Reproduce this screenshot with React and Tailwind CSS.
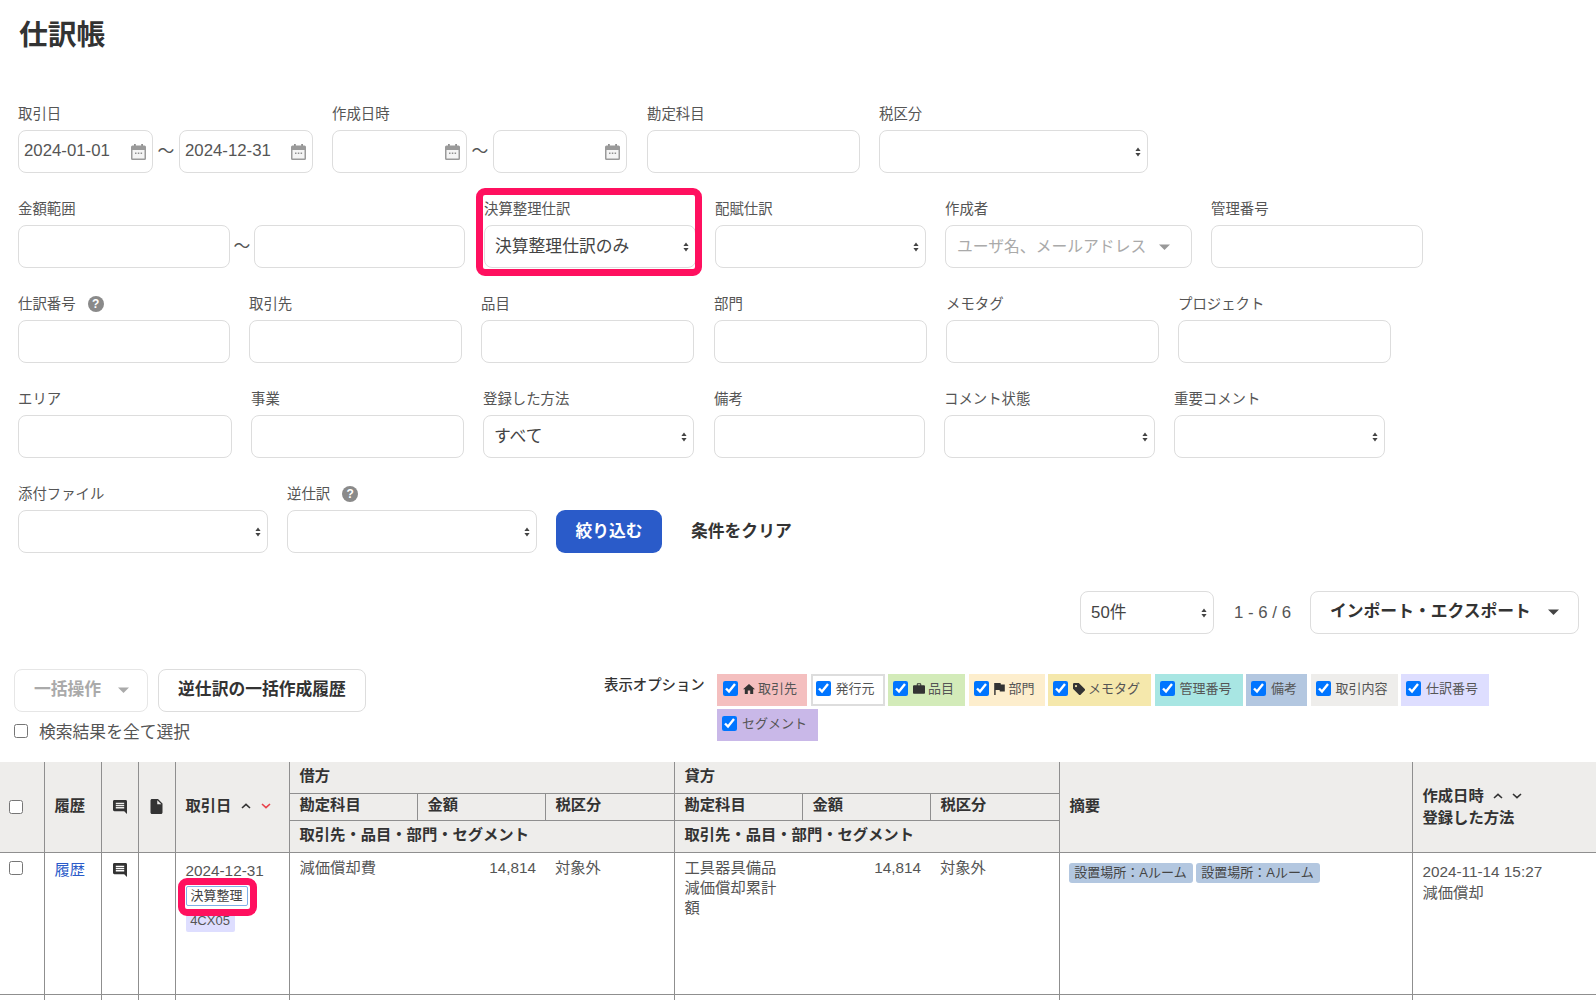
import React from "react";

const Arrows = () => (
  <svg className="absolute right-[7px] top-1/2 -translate-y-1/2 pointer-events-none" width="6" height="10" viewBox="0 0 6 10">
    <path d="M3 0.5 5.600 4H0.400z M3 9.500 0.400 6h5.200z" fill="#444" />
  </svg>
);

const Sel = ({ value = "", cls = "" }) => (
  <div className={"relative " + cls}>
    <select
      defaultValue={value}
      className="w-full h-[43px] appearance-none rounded-[8px] border border-[#dddddd] bg-white pl-[10px] pr-5 text-[16.8px] text-[#444444] outline-none"
    >
      <option value={value}>{value}</option>
    </select>
    <Arrows />
  </div>
);

const Inp = ({ cls = "" }) => (
  <input readOnly className={"h-[43px] rounded-[8px] border border-[#dddddd] bg-white outline-none " + cls} />
);

const Cal = () => (
  <svg width="15" height="16" viewBox="0 0 15 16" className="shrink-0">
    <rect x="3" y="0" width="1.8" height="3" fill="#8f8f8f" />
    <rect x="10.2" y="0" width="1.8" height="3" fill="#8f8f8f" />
    <path d="M1.500 1.500h12a1.500 1.500 0 0 1 1.500 1.500v11.500a1.500 1.500 0 0 1-1.500 1.500h-12A1.500 1.500 0 0 1 0 14.500V3a1.500 1.500 0 0 1 1.500-1.500z" fill="#9a9a9a" />
    <rect x="1.500" y="6" width="12" height="8.500" fill="#f4f4f4" />
    <rect x="4" y="8.500" width="1.500" height="1.500" fill="#8f8f8f" />
    <rect x="6.800" y="8.500" width="1.500" height="1.500" fill="#8f8f8f" />
    <rect x="9.600" y="8.500" width="1.500" height="1.500" fill="#8f8f8f" />
  </svg>
);

const DateBox = ({ value = "", cls = "" }) => (
  <div className={"flex h-[43px] items-center rounded-[8px] border border-[#dddddd] bg-white pl-[5px] pr-[6px] " + cls}>
    <input readOnly value={value} className="min-w-0 flex-1 bg-transparent pb-[2px] text-[16.8px] text-[#555555] outline-none" />
    <Cal />
  </div>
);

const Tilde = ({ cls = "" }) => (
  <span className={"text-center text-[16.8px] text-[#555555] " + cls}>〜</span>
);

const Help = () => (
  <span className="ml-3 flex h-4 w-4 items-center justify-center rounded-full bg-[#8a8a8a] text-[12px] font-bold leading-none text-white">?</span>
);

const Field = ({ label, help, cls = "", children }) => (
  <div className={"flex flex-col gap-[5px] " + cls}>
    <div className="flex h-5 items-center pb-[2px] text-[14.4px] leading-5 whitespace-nowrap text-[#555555]">
      {label}
      {help && <Help />}
    </div>
    {children}
  </div>
);

const Caret = ({ color = "#555555" }) => (
  <svg viewBox="0 0 13 7" className="h-[6px] w-[11px] shrink-0">
    <path d="M0 0.500h13L6.500 7z" fill={color} />
  </svg>
);

const Chev = ({ up, color = "#333333" }) => (
  <svg width="10" height="6" viewBox="0 0 10 6" className="shrink-0">
    <path d={up ? "M1 5 5 1.400 9 5" : "M1 1 5 4.600 9 1"} fill="none" stroke={color} strokeWidth="1.6" />
  </svg>
);

const CommentIcon = () => (
  <svg width="14" height="14" viewBox="2 2 20 20" className="mx-auto">
    <path fill="#333333" d="M21.990 4c0-1.100-.89-2-1.990-2H4c-1.100 0-2 .9-2 2v12c0 1.100.9 2 2 2h14l4 4-.01-18zM18 14H6v-2h12v2zm0-3H6V9h12v2zm0-3H6V6h12v2z" />
  </svg>
);

const HomeIcon = () => (
  <svg width="12" height="12" viewBox="2 3 20 17"><path fill="#333333" d="M10 20v-6h4v6h5v-8h3L12 3 2 12h3v8z" /></svg>
);
const CaseIcon = () => (
  <svg width="12" height="11" viewBox="0 0 16 14">
    <path fill="#333333" d="M5 2.500V1.200C5 .5 5.500 0 6.200 0h3.600C10.500 0 11 .5 11 1.200v1.300h3.500c.8 0 1.500.7 1.500 1.500V12.500c0 .8-.7 1.500-1.500 1.500h-13C.7 14 0 13.300 0 12.500V4c0-.8.7-1.500 1.500-1.500zm1.300 0h3.400V1.300H6.300z" />
  </svg>
);
const FlagIcon = () => (
  <svg width="11" height="12" viewBox="5 4 15 17"><path fill="#333333" d="M14.400 6 14 4H5v17h2v-7h5.600l.4 2h7V6z" /></svg>
);
const TagIcon = () => (
  <svg width="12" height="12" viewBox="0 0 16 16">
    <path fill="#333333" d="M1.500 0h6.200l8 8a1.500 1.500 0 0 1 0 2.100l-5.600 5.600a1.500 1.500 0 0 1-2.100 0l-8-8V1.500A1.500 1.500 0 0 1 1.500 0zM4 5.500a1.500 1.500 0 1 0 0-3 1.500 1.500 0 0 0 0 3z" />
  </svg>
);

const Chip = ({ cls, icon, label, textCls = "ml-[5px]" }) => (
  <label className={"flex h-8 items-center pb-[3px] text-[13px] leading-none text-[#555555] " + cls}>
    <input type="checkbox" defaultChecked className="m-0 h-[15px] w-[15px] shrink-0" />
    {icon && <span className="ml-[5px] flex w-[12px] justify-center">{icon}</span>}
    <span className={"whitespace-nowrap " + textCls}>{label}</span>
  </label>
);

const Th = ({ cls = "", children, ...p }) => (
  <th {...p} className={"border border-[#8f8f8f] bg-[#eeedeb] pl-[10px] pr-[10px] text-left align-middle text-[15.3px] font-bold leading-5 text-[#333333] " + cls}>
    {children}
  </th>
);
const Td = ({ cls = "", children, ...p }) => (
  <td {...p} className={"border border-[#8f8f8f] align-top text-[15.3px] leading-[20px] text-[#555555] " + cls}>
    {children}
  </td>
);

export default function App() {
  return (
    <div className="h-[1000px] w-full overflow-hidden bg-white font-['Liberation_Sans','Noto_Sans_CJK_JP',sans-serif] text-[#333333]">
      <div className="h-[105px] pl-[19px] pt-[15px]">
        <h1 className="text-[28.8px] font-bold leading-10 text-[#333333]">仕訳帳</h1>
      </div>

      <div className="flex flex-col gap-[27px] pl-[18px]">
        <div className="flex gap-[19px]">
          <Field label="取引日" cls="w-[295px]">
            <div className="flex items-center">
              <DateBox value="2024-01-01" cls="w-[135px]" />
              <Tilde cls="w-[26px]" />
              <DateBox value="2024-12-31" cls="w-[134px]" />
            </div>
          </Field>
          <Field label="作成日時" cls="w-[296px]">
            <div className="flex items-center">
              <DateBox cls="w-[135px]" />
              <Tilde cls="w-[26px]" />
              <DateBox cls="w-[134px]" />
            </div>
          </Field>
          <Field label="勘定科目" cls="w-[213px]"><Inp cls="w-full" /></Field>
          <Field label="税区分" cls="w-[269px]"><Sel cls="w-full" /></Field>
        </div>

        <div className="flex gap-[19px]">
          <Field label="金額範囲" cls="w-[447px]">
            <div className="flex items-center">
              <Inp cls="w-[212px]" />
              <Tilde cls="w-[24px]" />
              <Inp cls="w-[211px]" />
            </div>
          </Field>
          <div className="relative w-[212px]">
            <Field label="決算整理仕訳" cls="w-full">
              <Sel value="決算整理仕訳のみ" cls="w-full" />
            </Field>
            <div className="pointer-events-none absolute -left-[8px] -top-[12px] h-[88px] w-[226px] rounded-[9px] border-[7px] border-[#ff105f]" />
          </div>
          <Field label="配賦仕訳" cls="w-[211px]"><Sel cls="w-full" /></Field>
          <Field label="作成者" cls="w-[247px]">
            <div className="flex h-[43px] items-center justify-between rounded-[8px] border border-[#dddddd] bg-white pl-[11px] pr-[21px]">
              <span className="whitespace-nowrap text-[15.8px] text-[#aaaaaa]">ユーザ名、メールアドレス</span>
              <Caret color="#999999" />
            </div>
          </Field>
          <Field label="管理番号" cls="w-[212px]"><Inp cls="w-full" /></Field>
        </div>

        <div className="flex gap-[19px]">
          <Field label="仕訳番号" help cls="w-[212px]"><Inp cls="w-full" /></Field>
          <Field label="取引先" cls="w-[213px]"><Inp cls="w-full" /></Field>
          <Field label="品目" cls="w-[213px]"><Inp cls="w-full" /></Field>
          <Field label="部門" cls="ml-px w-[213px]"><Inp cls="w-full" /></Field>
          <Field label="メモタグ" cls="w-[213px]"><Inp cls="w-full" /></Field>
          <Field label="プロジェクト" cls="w-[213px]"><Inp cls="w-full" /></Field>
        </div>

        <div className="flex gap-[19px]">
          <Field label="エリア" cls="w-[214px]"><Inp cls="w-full" /></Field>
          <Field label="事業" cls="w-[213px]"><Inp cls="w-full" /></Field>
          <Field label="登録した方法" cls="w-[211px]"><Sel value="すべて" cls="w-full" /></Field>
          <Field label="備考" cls="ml-px w-[211px]"><Inp cls="w-full" /></Field>
          <Field label="コメント状態" cls="w-[211px]"><Sel cls="w-full" /></Field>
          <Field label="重要コメント" cls="w-[211px]"><Sel cls="w-full" /></Field>
        </div>

        <div className="flex items-end gap-[19px]">
          <Field label="添付ファイル" cls="w-[250px]"><Sel cls="w-full" /></Field>
          <Field label="逆仕訳" help cls="w-[250px]"><Sel cls="w-full" /></Field>
          <button className="h-[43px] w-[106px] rounded-[9px] bg-[#2a5bc9] text-[16.8px] font-bold text-white">絞り込む</button>
          <button className="ml-[10px] text-[16.8px] font-bold leading-[43px] text-[#333333]">条件をクリア</button>
        </div>
      </div>

      <div className="mt-[38px] flex h-[43px] items-center justify-end pr-[17px]">
        <Sel value="50件" cls="w-[134px]" />
        <span className="ml-[20px] text-[16.8px] text-[#555555]">1 - 6 / 6</span>
        <button className="ml-[19px] flex h-[43px] w-[269px] items-center justify-between rounded-[8px] border border-[#dddddd] bg-white pb-[2px] pl-[19px] pr-[19px] text-[16.8px] font-bold text-[#333333]">
          インポート・エクスポート
          <Caret color="#444444" />
        </button>
      </div>

      <div className="mt-[35px] flex h-[93px]">
        <div className="w-[604px] pl-[14px]">
          <div className="flex gap-[10px]">
            <button className="flex h-[43px] w-[134px] items-center justify-between rounded-[8px] border border-[#e6e6e6] bg-white pb-[2px] pl-[19px] pr-[18px] text-[16.8px] font-bold text-[#aaaaaa]">
              一括操作
              <Caret color="#aaaaaa" />
            </button>
            <button className="h-[43px] w-[208px] rounded-[8px] border border-[#dddddd] bg-white pb-[2px] text-[16.8px] font-bold text-[#333333]">逆仕訳の一括作成履歴</button>
          </div>
          <label className="mt-[10px] flex h-[21px] items-center text-[16.8px] leading-[21px] text-[#555555]">
            <input type="checkbox" className="m-0 mb-[3px] h-[14px] w-[14px]" />
            <span className="ml-[11px]">検索結果を全て選択</span>
          </label>
        </div>
        <div className="w-[113px] pt-[6px] text-[14.4px] font-medium leading-5 text-[#333333]">表示オプション</div>
        <div className="flex w-[790px] flex-wrap content-start gap-x-[3.500px] gap-y-[3px] pt-[5px]">
          <Chip cls="w-[90px] bg-[#f4bfbf] pl-[6px]" icon={<HomeIcon />} label="取引先" textCls="ml-[3px]" />
          <Chip cls="w-[74px] border-2 border-[#dddddd] bg-white pl-[3px]" label="発行元" />
          <Chip cls="w-[77px] bg-[#d3ebb9] pl-[5px]" icon={<CaseIcon />} label="品目" textCls="ml-[3px]" />
          <Chip cls="w-[76px] bg-[#fdeecd] pl-[5px]" icon={<FlagIcon />} label="部門" textCls="ml-[3px]" />
          <Chip cls="w-[103px] bg-[#f5e8ac] pl-[5px]" icon={<TagIcon />} label="メモタグ" textCls="ml-[3px]" />
          <Chip cls="w-[88px] bg-[#a8e6e3] pl-[5px]" label="管理番号" />
          <Chip cls="w-[61px] bg-[#b3c7e0] pl-[5px]" label="備考" />
          <Chip cls="w-[87px] bg-[#eeedeb] pl-[5px]" label="取引内容" />
          <Chip cls="w-[88px] bg-[#dedeff] pl-[5px]" label="仕訳番号" />
          <Chip cls="w-[101px] bg-[#c9b8e8] pl-[5px]" label="セグメント" />
        </div>
      </div>

      <table className="w-[1596px] table-fixed border-collapse">
        <colgroup>
          <col className="w-[44px]" />
          <col className="w-[57px]" />
          <col className="w-[37px]" />
          <col className="w-[37px]" />
          <col className="w-[114px]" />
          <col className="w-[128px]" />
          <col className="w-[128px]" />
          <col className="w-[129px]" />
          <col className="w-[128px]" />
          <col className="w-[128px]" />
          <col className="w-[129px]" />
          <col className="w-[353px]" />
          <col className="w-[184px]" />
        </colgroup>
        <thead>
          <tr className="h-[31px]">
            <Th rowSpan={3} cls="border-t-0 border-l-0 pt-[1px]"><input type="checkbox" className="-ml-px m-0 block h-[14px] w-[14px]" /></Th>
            <Th rowSpan={3} cls="border-t-0 pb-[1px]">履歴</Th>
            <Th rowSpan={3} cls="border-t-0"><span className="-mx-[10px] block"><CommentIcon /></span></Th>
            <Th rowSpan={3} cls="border-t-0">
              <span className="-mx-[10px] block">
                <svg width="13" height="15" viewBox="4 2 16 20" className="mx-auto"><path fill="#333333" d="M6 2c-1.100 0-1.990.9-1.990 2L4 20c0 1.100.89 2 1.990 2H18c1.100 0 2-.9 2-2V8l-6-6H6zm7 7V3.500L18.500 9H13z" /></svg>
              </span>
            </Th>
            <Th rowSpan={3} cls="border-t-0 pb-[1px]">
              <div className="flex items-center gap-[10px]">取引日<Chev up /><Chev color="#e8414a" /></div>
            </Th>
            <Th colSpan={3} cls="border-t-0 pb-[2px]">借方</Th>
            <Th colSpan={3} cls="border-t-0 pb-[2px]">貸方</Th>
            <Th rowSpan={3} cls="border-t-0 pb-[1px]">摘要</Th>
            <Th rowSpan={3} cls="border-t-0 border-r-0">
              <div className="flex items-center gap-[9px]">作成日時<Chev up /><Chev /></div>
              <div className="mt-[2px]">登録した方法</div>
            </Th>
          </tr>
          <tr className="h-[27px]">
            <Th cls="pb-[3px]">勘定科目</Th><Th cls="pb-[3px]">金額</Th><Th cls="pb-[3px]">税区分</Th>
            <Th cls="pb-[3px]">勘定科目</Th><Th cls="pb-[3px]">金額</Th><Th cls="pb-[3px]">税区分</Th>
          </tr>
          <tr className="h-[32px]">
            <Th colSpan={3} cls="pb-[2px]">取引先・品目・部門・セグメント</Th>
            <Th colSpan={3} cls="pb-[2px]">取引先・品目・部門・セグメント</Th>
          </tr>
        </thead>
        <tbody>
          <tr className="h-[142px]">
            <Td cls="border-l-0 pl-[9px] pt-[8px]"><input type="checkbox" className="m-0 block h-[14px] w-[14px]" /></Td>
            <Td cls="pl-[10px] pt-[7px]"><a className="text-[#2a5bc9]">履歴</a></Td>
            <Td cls="pt-[10px]"><CommentIcon /></Td>
            <Td />
            <Td cls="pl-[10px] pt-[8px]">
              <div className="relative">
                <div>2024-12-31</div>
                <div className="mt-[5px] flex h-[20px] w-[62px] items-center justify-center rounded-[2px] border border-[#7fb0e8] bg-white pb-px text-[13px] leading-none text-[#444444]">決算整理</div>
                <div className="mt-[3px] flex h-[23px] w-[49px] items-center justify-center rounded-[2px] bg-[#dedeff] text-[13px] leading-none text-[#555555]">4CX05</div>
                <div className="pointer-events-none absolute -left-[8px] top-[17px] h-[38px] w-[79px] rounded-[9px] border-[7px] border-[#ff105f]" />
              </div>
            </Td>
            <Td cls="border-r-0 pl-[10px] pt-[5px]">減価償却費</Td>
            <Td cls="border-x-0 pr-[9px] pt-[5px] text-right">14,814</Td>
            <Td cls="border-l-0 pl-[10px] pt-[5px]">対象外</Td>
            <Td cls="border-r-0 pl-[10px] pt-[5px] leading-[19.5px]">工具器具備品<br />減価償却累計<br />額</Td>
            <Td cls="border-x-0 pr-[9px] pt-[5px] text-right">14,814</Td>
            <Td cls="border-l-0 pl-[10px] pt-[5px]">対象外</Td>
            <Td cls="pl-[9px] pt-[10px]">
              <div className="flex gap-[3px]">
                <span className="flex h-5 w-[124px] items-center justify-center rounded-[3px] bg-[#b3c7e0] text-[13px] leading-none whitespace-nowrap text-[#444444]">設置場所：Aルーム</span>
                <span className="flex h-5 w-[124px] items-center justify-center rounded-[3px] bg-[#b3c7e0] text-[13px] leading-none whitespace-nowrap text-[#444444]">設置場所：Aルーム</span>
              </div>
            </Td>
            <Td cls="border-r-0 pl-[10px] pt-[8px] leading-[21px]">2024-11-14 15:27<br />減価償却</Td>
          </tr>
          <tr className="h-[40px]">
            <Td cls="border-l-0" /><Td /><Td /><Td /><Td /><Td cls="border-r-0" /><Td cls="border-x-0" /><Td cls="border-l-0" /><Td cls="border-r-0" /><Td cls="border-x-0" /><Td cls="border-l-0" /><Td /><Td cls="border-r-0" />
          </tr>
        </tbody>
      </table>
    </div>
  );
}
